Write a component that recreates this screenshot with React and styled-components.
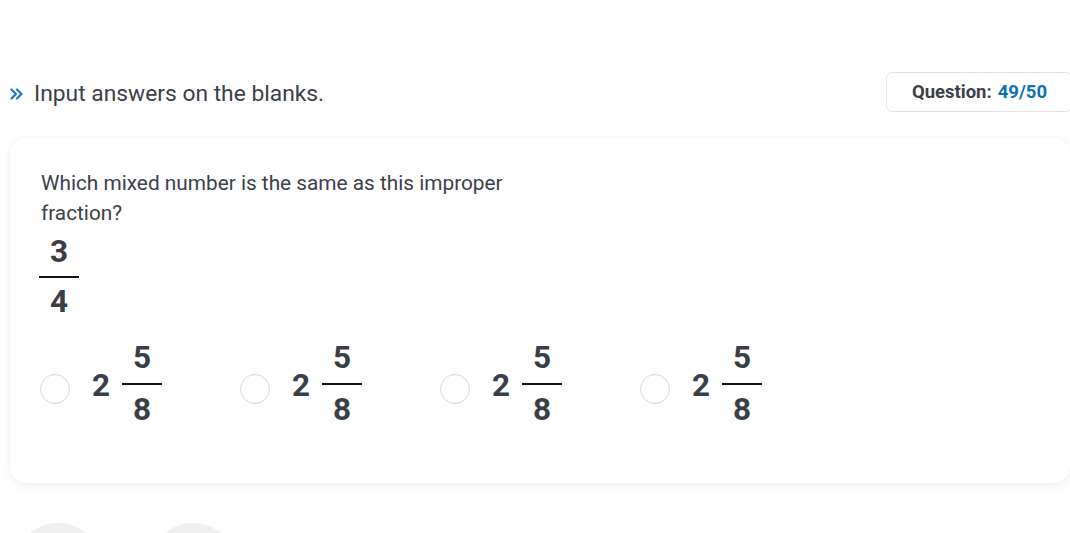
import React from "react";
import styled, { createGlobalStyle } from "styled-components";

const Global = createGlobalStyle`
  html, body { margin: 0; padding: 0; background: #ffffff; overflow: hidden; }
  body { font-family: Roboto, "Liberation Sans", Arial, sans-serif; color: #3c4049; }
`;

const Page = styled.div`
  padding: 72px 0 0 10px;
  width: 1060px;
  box-sizing: content-box;
`;

const HeaderRow = styled.div`
  display: flex;
  align-items: center;
  justify-content: space-between;
  height: 40px;
  margin-right: -2px;
`;

const Instruction = styled.div`
  display: flex;
  align-items: center;
  gap: 11px;
  font-size: 22.8px;
  line-height: 40px;
  padding-top: 3px;
  color: #3c4049;
`;

const Badge = styled.div`
  height: 40px;
  box-sizing: border-box;
  display: flex;
  align-items: center;
  padding: 0 24px 0 25px;
  border: 1px solid #e3e5e8;
  border-radius: 6px;
  font-size: 18.5px;
  font-weight: 700;
  color: #3c4049;
  gap: 6px;
`;

const Count = styled.span`
  color: #0b72b5;
`;

const Card = styled.div`
  margin-top: 26px;
  background: #fff;
  border-radius: 16px;
  box-shadow: 0 3px 10px rgba(0, 0, 0, 0.06), 0 0 4px rgba(0, 0, 0, 0.03);
  padding: 30px 31px 48px 31px;
`;

const QuestionText = styled.div`
  font-size: 20.8px;
  line-height: 30px;
  max-width: 490px;
  color: #3c4049;
`;

const Frac = styled.span`
  display: inline-flex;
  flex-direction: column;
  align-items: stretch;
  font-size: 31.5px;
  font-weight: 700;
  color: #3a3e47;
  text-align: center;
  margin-left: ${(p) => p.$shift || 0}px;
`;

const Num = styled.span`
  line-height: ${(p) => p.$lh}px;
  padding: 0 ${(p) => p.$pad}px;
`;

const Bar = styled.span`
  height: 2px;
  background: #111;
`;

const Options = styled.div`
  display: flex;
  margin-top: 7px;
  margin-left: -1px;
`;

const Option = styled.label`
  width: 200px;
  display: flex;
  align-items: center;
`;

const Radio = styled.span`
  width: 30px;
  height: 30px;
  box-sizing: border-box;
  border: 1px solid #d6d8db;
  border-radius: 50%;
  background: #fff;
  margin-top: 10px;
  flex-shrink: 0;
`;

const Whole = styled.span`
  font-size: 31.5px;
  font-weight: 700;
  color: #3a3e47;
  margin: 3px 12px 0 22px;
`;

const Bubbles = styled.div`
  display: flex;
  gap: 45px;
  margin-top: 40px;
  padding-left: 3px;
`;

const Bubble = styled.div`
  width: 90px;
  height: 90px;
  border-radius: 50%;
  background: #efefef;
`;

const Chevrons = () => (
  <svg width="13" height="12" viewBox="0 0 13 12" fill="none">
    <path d="M1.5 1.5 L6 6 L1.5 10.5" stroke="#1a78c2" strokeWidth="2.2" strokeLinecap="round" strokeLinejoin="round" />
    <path d="M7 1.5 L11.5 6 L7 10.5" stroke="#1a78c2" strokeWidth="2.2" strokeLinecap="round" strokeLinejoin="round" />
  </svg>
);

const Fraction = ({ n, d, lh, pad, shift }) => (
  <Frac $shift={shift}>
    <Num $lh={lh} $pad={pad}>{n}</Num>
    <Bar />
    <Num $lh={lh} $pad={pad}>{d}</Num>
  </Frac>
);

export default function App() {
  const options = [0, 1, 2, 3];
  return (
    <>
      <Global />
      <Page>
        <HeaderRow>
          <Instruction>
            <Chevrons />
            <span>Input answers on the blanks.</span>
          </Instruction>
          <Badge>
            Question: <Count>49/50</Count>
          </Badge>
        </HeaderRow>
        <Card>
          <QuestionText>Which mixed number is the same as this improper fraction?</QuestionText>
          <Fraction n="3" d="4" lh={48} pad={11} shift={-2} />
          <Options>
            {options.map((i) => (
              <Option key={i}>
                <Radio />
                <Whole>2</Whole>
                <Fraction n="5" d="8" lh={50} pad={11} />
              </Option>
            ))}
          </Options>
        </Card>
        <Bubbles>
          <Bubble />
          <Bubble />
        </Bubbles>
      </Page>
    </>
  );
}
